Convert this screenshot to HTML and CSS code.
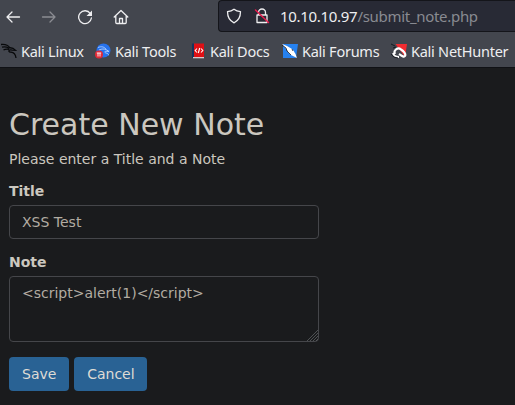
FILE: index.html
```
<!DOCTYPE html>
<html lang="en">
<head>
<meta charset="utf-8">
<title>Create New Note</title>
<link rel="stylesheet" href="styles.css">
</head>
<body>
<header class="browser">
  <div class="toolbar">
    <nav class="controls">
      <svg class="icon" viewBox="0 0 16 16"><path d="M14.500 8H2M7 3 2 8l5 5"/></svg>
      <svg class="icon disabled" viewBox="0 0 16 16"><path d="M1.500 8H14M9 3l5 5-5 5"/></svg>
      <svg class="icon" viewBox="0 0 16 16"><path d="M13.300 4.500A6.400 6.400 0 1 0 14.400 9"/><path class="solid" d="M15 1.500V7H9.500z"/></svg>
      <svg class="icon" viewBox="0 0 16 16"><path d="M1.200 8 8 1.500 14.800 8M2.800 7v6.500q0 1 1 1h8.400q1 0 1-1V7M6.500 14V9.500h3V14"/></svg>
    </nav>
    <div class="address">
      <svg class="icon" viewBox="0 0 16 16"><path d="M8 1.200c2 1.500 4 2.100 6.500 2.400 0 5-1.200 8.900-6.500 11.200C2.700 12.500 1.500 8.600 1.500 3.600 4 3.300 6 2.700 8 1.200z"/></svg>
      <svg class="icon lock" viewBox="0 0 16 16"><path d="M4.500 7V4.500a3.500 3.500 0 0 1 7 0V7M3 7h10v7.500H3z"/><path class="slash" d="m1.500 2 13 12.500"/></svg>
      <span class="url">10.10.10.97<span class="path">/submit_note.php</span></span>
    </div>
  </div>
  <nav class="bookmarks">
    <a class="bookmark linux"><svg viewBox="0 0 16 16"><g class="dragon"><path d="M0 1.500c4-.5 7 .5 9 3.500M1 4.200c3-1 5-.2 7 1M2.500 7c2-1.300 4-1 5.500-.7M8 4.500l4 .8 2.500 2-3-.2C7 6 7 9 10 9.200c3 .3 4.500 2 5 5.800"/></g></svg><span>Kali Linux</span></a>
    <a class="bookmark tools"><svg viewBox="0 0 16 16"><circle cx="8.500" cy="7.500" r="7" fill="#2672ed"/><path d="M3 4.500c4-1.500 6-.5 8 1.500M4 7c3-1.500 5-1 7-.5l3 2-3-.3c-2 0-1 2 .5 2 1.500.3 2 1 2 2" fill="none" stroke="#b5d3ff" stroke-width=".9"/><circle cx="4" cy="11.500" r="4" fill="#e12936"/><path d="M1.800 10h4.400M3 10v3.500M5 10v3.500" stroke="#fff" stroke-width=".9"/></svg><span>Kali Tools</span></a>
    <a class="bookmark docs"><svg viewBox="0 0 16 16"><path d="M2 .500h2V15H2z" fill="#17345d"/><path d="M4 .500h10V14H4z" fill="#df1015"/><path d="M3 14h11v1.300H3z" fill="#d9c9cc"/><path d="M7 5.500 5.200 7.500l1.800 2M11 5.500l1.800 2-1.800 2M9.700 5l-1.400 5" fill="none" stroke="#fff" stroke-width="1.100"/></svg><span>Kali Docs</span></a>
    <a class="bookmark forums"><svg viewBox="0 0 16 16"><path d="M1 1h15l-2 14H1z" fill="#2681ef"/><path d="M0 1 5 3l5 3c2 1 2 3 3.500 5l1.500 4-4-2c-3-1-5-3-6-6z" fill="#fff"/><path d="m0 2 4 3 1 3 4 4M10 6l1 2" fill="none" stroke="#171b22" stroke-width=".8"/></svg><span>Kali Forums</span></a>
    <a class="bookmark hunter"><svg viewBox="0 0 16 16"><path d="M4.500 1H16l-2 13z" fill="#f12b30"/><path d="M4 11C2 7 7 4 10 6.500c3 2 5 4.500 4 6.500-1 1.500-3 0-6-2" fill="none" stroke="#fff" stroke-width="2.200"/><path d="M2 10q1 4 6 4" fill="none" stroke="#fff" stroke-width="1.800"/><path d="M0 1l4 2M2 5l3-1M0 11q2 4 7 4" stroke="#171b22" fill="none"/></svg><span>Kali NetHunter</span></a>
  </nav>
</header>
<main class="page">
  <h2>Create New Note</h2>
  <p>Please enter a Title and a Note</p>
  <form>
    <div class="field"><label for="title">Title</label><input id="title" type="text" value="XSS Test"></div>
    <div class="field"><label for="note">Note</label><div class="note-box"><textarea id="note" spellcheck="false">&lt;script&gt;alert(1)&lt;/script&gt;</textarea><svg class="grip" viewBox="0 0 11 11"><path d="M0 11 11 0M3 11l8-8M6 11l5-5M9 11l2-2"/></svg></div></div>
    <div class="actions"><button type="button">Save</button><button class="cancel" type="button">Cancel</button></div>
  </form>
</main>
</body>
</html>
```
FILE: styles.css
```
* { box-sizing: border-box; }
body { margin: 0; height: 405px; overflow: hidden; background: #1a1b1d; color: #cbc7bf; font: 14px/20px "DejaVu Sans", sans-serif; }
.browser { height: 68px; background: #43464e; border-bottom: 1px solid #101115; font-family: "Noto Sans", sans-serif; color: #eeeef0; overflow: hidden; }
.toolbar { display: flex; height: 33px; }
.controls { display: flex; gap: 20px; padding: 9px 0 0 5px; width: 218px; }
.icon { width: 16px; height: 16px; flex: none; fill: none; stroke: #eeeef0; stroke-width: 1.300; stroke-linecap: round; stroke-linejoin: round; }
.icon .solid { fill: #eeeef0; stroke: none; }
.icon .slash { stroke: #e51c4d; stroke-width: 1.500; }
.disabled { opacity: .42; }
.address { flex: 1; height: 32px; padding-left: 7px; display: flex; align-items: center; background: #282a35; border: 1px solid #14151a; border-right: 0; border-radius: 4px 0 0 4px; }
.lock { margin-left: 12px; }
.url { margin-left: 10px; font-size: 15px; letter-spacing: -.3px; white-space: nowrap; }
.path { color: #888a91; }
.bookmarks { display: flex; height: 35px; padding: 2px 0 0 1px; font-size: 14.500px; letter-spacing: -.25px; white-space: nowrap; }
.bookmark { display: flex; align-items: center; gap: 4px; height: 31px; flex: none; }
.bookmark svg { width: 16px; height: 16px; flex: none; }
.linux { width: 94px; }
.tools { width: 95px; }
.docs { width: 92px; }
.forums { width: 109px; }
.dragon { fill: none; stroke: #08090b; stroke-width: 1.300; }
.page { padding: 40px 9px 0; }
h2 { margin: 0; font-size: 30px; line-height: 33px; font-weight: 400; }
p { margin: 8px 0 14px; }
.field { margin-bottom: 15px; width: 310px; }
label { display: block; font-weight: 700; line-height: 17px; margin-bottom: 5px; }
input, textarea { display: block; width: 310px; margin: 0; padding: 6px 12px; border: 1px solid #45464a; border-radius: 4px; background: #1a1b1d; color: #b2aca2; font: 14px/20px "DejaVu Sans", sans-serif; outline: 0; }
input { height: 34px; }
textarea { height: 66px; resize: none; overflow: hidden; }
.note-box { position: relative; }
.grip { position: absolute; right: 1px; bottom: 1px; width: 11px; height: 11px; fill: none; stroke: #66686b; stroke-width: .7; }
.actions { display: flex; gap: 5px; }
button { height: 34px; padding: 6px 13px; border: 0; border-radius: 4px; background: #296294; color: #dedbd5; font: 14px/20px "DejaVu Sans", sans-serif; }
.cancel { width: 73px; padding: 6px 0; }
```
